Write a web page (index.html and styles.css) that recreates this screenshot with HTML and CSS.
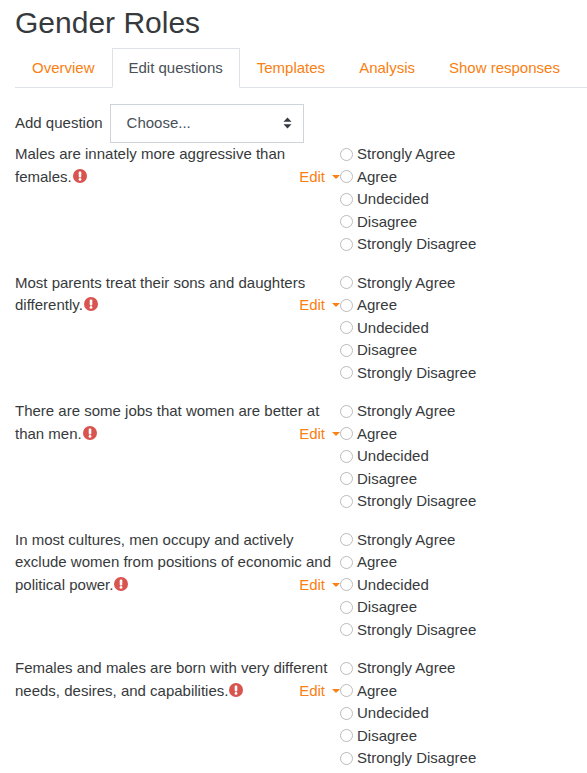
FILE: index.html
```html
<!doctype html>
<html lang="en">
<head>
    <meta charset="UTF-8">
    <title>Gender Roles</title>
    <link rel="stylesheet" href="styles.css">
</head>
<body>
    <h2>Gender Roles</h2>
    <ul class="tabs">
        <li><a href="#">Overview</a></li>
        <li class="active"><a href="#">Edit questions</a></li>
        <li><a href="#">Templates</a></li>
        <li><a href="#">Analysis</a></li>
        <li><a href="#">Show responses</a></li>
    </ul>
    <form action="">
        <div class="add">
            <label for="add">Add question</label>
            <div class="select">
                <select id="add"><option>Choose...</option></select>
                <svg width="9" height="12" viewBox="0 0 9 12"><path d="M4.5 0.5L8.5 4.7H0.5zM4.5 11.5L0.5 7.3H8.5z" fill="#343a40"/></svg>
            </div>
        </div>

        <div class="question">
            <div class="text">Males are innately more aggressive than females.<svg class="req" width="14" height="14" viewBox="0 0 14 14"><circle cx="7" cy="7" r="7" fill="#d9534f"/><rect x="5.7" y="2.6" width="2.6" height="5.8" rx="1" fill="#fff"/><circle cx="7" cy="10.4" r="1.4" fill="#fff"/></svg><a class="edit" href="#">Edit<i class="caret"></i></a></div>
            <div class="answers">
                <label><input type="radio" name="q1">Strongly Agree</label>
                <label><input type="radio" name="q1">Agree</label>
                <label><input type="radio" name="q1">Undecided</label>
                <label><input type="radio" name="q1">Disagree</label>
                <label><input type="radio" name="q1">Strongly Disagree</label>
            </div>
        </div>

        <div class="question">
            <div class="text">Most parents treat their sons and daughters differently.<svg class="req" width="14" height="14" viewBox="0 0 14 14"><circle cx="7" cy="7" r="7" fill="#d9534f"/><rect x="5.7" y="2.6" width="2.6" height="5.8" rx="1" fill="#fff"/><circle cx="7" cy="10.4" r="1.4" fill="#fff"/></svg><a class="edit" href="#">Edit<i class="caret"></i></a></div>
            <div class="answers">
                <label><input type="radio" name="q2">Strongly Agree</label>
                <label><input type="radio" name="q2">Agree</label>
                <label><input type="radio" name="q2">Undecided</label>
                <label><input type="radio" name="q2">Disagree</label>
                <label><input type="radio" name="q2">Strongly Disagree</label>
            </div>
        </div>

        <div class="question">
            <div class="text">There are some jobs that women are better at than men.<svg class="req" width="14" height="14" viewBox="0 0 14 14"><circle cx="7" cy="7" r="7" fill="#d9534f"/><rect x="5.7" y="2.6" width="2.6" height="5.8" rx="1" fill="#fff"/><circle cx="7" cy="10.4" r="1.4" fill="#fff"/></svg><a class="edit" href="#">Edit<i class="caret"></i></a></div>
            <div class="answers">
                <label><input type="radio" name="q3">Strongly Agree</label>
                <label><input type="radio" name="q3">Agree</label>
                <label><input type="radio" name="q3">Undecided</label>
                <label><input type="radio" name="q3">Disagree</label>
                <label><input type="radio" name="q3">Strongly Disagree</label>
            </div>
        </div>

        <div class="question">
            <div class="text">In most cultures, men occupy and actively exclude women from positions of economic and political power.<svg class="req" width="14" height="14" viewBox="0 0 14 14"><circle cx="7" cy="7" r="7" fill="#d9534f"/><rect x="5.7" y="2.6" width="2.6" height="5.8" rx="1" fill="#fff"/><circle cx="7" cy="10.4" r="1.4" fill="#fff"/></svg><a class="edit" href="#">Edit<i class="caret"></i></a></div>
            <div class="answers">
                <label><input type="radio" name="q4">Strongly Agree</label>
                <label><input type="radio" name="q4">Agree</label>
                <label><input type="radio" name="q4">Undecided</label>
                <label><input type="radio" name="q4">Disagree</label>
                <label><input type="radio" name="q4">Strongly Disagree</label>
            </div>
        </div>

        <div class="question">
            <div class="text">Females and males are born with very different needs, desires, and capabilities.<svg class="req" width="14" height="14" viewBox="0 0 14 14"><circle cx="7" cy="7" r="7" fill="#d9534f"/><rect x="5.7" y="2.6" width="2.6" height="5.8" rx="1" fill="#fff"/><circle cx="7" cy="10.4" r="1.4" fill="#fff"/></svg><a class="edit" href="#">Edit<i class="caret"></i></a></div>
            <div class="answers">
                <label><input type="radio" name="q5">Strongly Agree</label>
                <label><input type="radio" name="q5">Agree</label>
                <label><input type="radio" name="q5">Undecided</label>
                <label><input type="radio" name="q5">Disagree</label>
                <label><input type="radio" name="q5">Strongly Disagree</label>
            </div>
        </div>
    </form>
</body>
</html>
```

FILE: styles.css
```css
html{
    overflow: hidden;
}
body{
    margin: 0;
    padding: 0 0 0 15px;
    font-family: "Liberation Sans", Arial, sans-serif;
    font-size: 15px;
    line-height: 22.5px;
    color: #373a3c;
    background: #fff;
    width: 572px;
    overflow: hidden;
}
a{
    color: #f98012;
    text-decoration: none;
}
h2{
    margin: 0;
    padding-top: 5px;
    font-size: 30px;
    font-weight: 400;
    line-height: 36px;
    height: 43px;
}
.tabs{
    display: flex;
    margin: 0 0 16px;
    padding: 0;
    list-style: none;
    border-bottom: 1px solid #dee2e6;
    height: 39px;
}
.tabs li{
    height: 40px;
}
.tabs a{
    display: block;
    height: 40px;
    padding: 8px 16px;
    border: 1px solid transparent;
    box-sizing: border-box;
}
.tabs .active a{
    color: #495057;
    background: #fff;
    border-color: #dee2e6 #dee2e6 #fff;
}
.add{
    display: flex;
    align-items: center;
    gap: 7px;
}
.select{
    position: relative;
}
.select select{
    display: block;
    appearance: none;
    width: 194px;
    height: 39px;
    padding: 0 16px;
    font: inherit;
    color: #495057;
    background: #fff;
    border: 1px solid #ced4da;
    border-radius: 0;
}
.select svg{
    position: absolute;
    right: 12px;
    top: 13px;
}
.question{
    display: flex;
    margin-bottom: 16px;
}
.text{
    width: 325px;
    flex: none;
}
.req{
    margin-left: 1px;
    vertical-align: -1px;
}
.edit{
    float: right;
}
.caret{
    display: inline-block;
    margin-left: 7px;
    vertical-align: 3px;
    border-top: 4px solid #f98012;
    border-left: 4px solid transparent;
    border-right: 4px solid transparent;
}
.answers label{
    display: flex;
    align-items: center;
}
.answers input{
    appearance: none;
    flex: none;
    width: 13px;
    height: 13px;
    margin: 0 4px 0 0;
    border: 1px solid #bbb;
    border-radius: 50%;
    background: #fff;
}
```
